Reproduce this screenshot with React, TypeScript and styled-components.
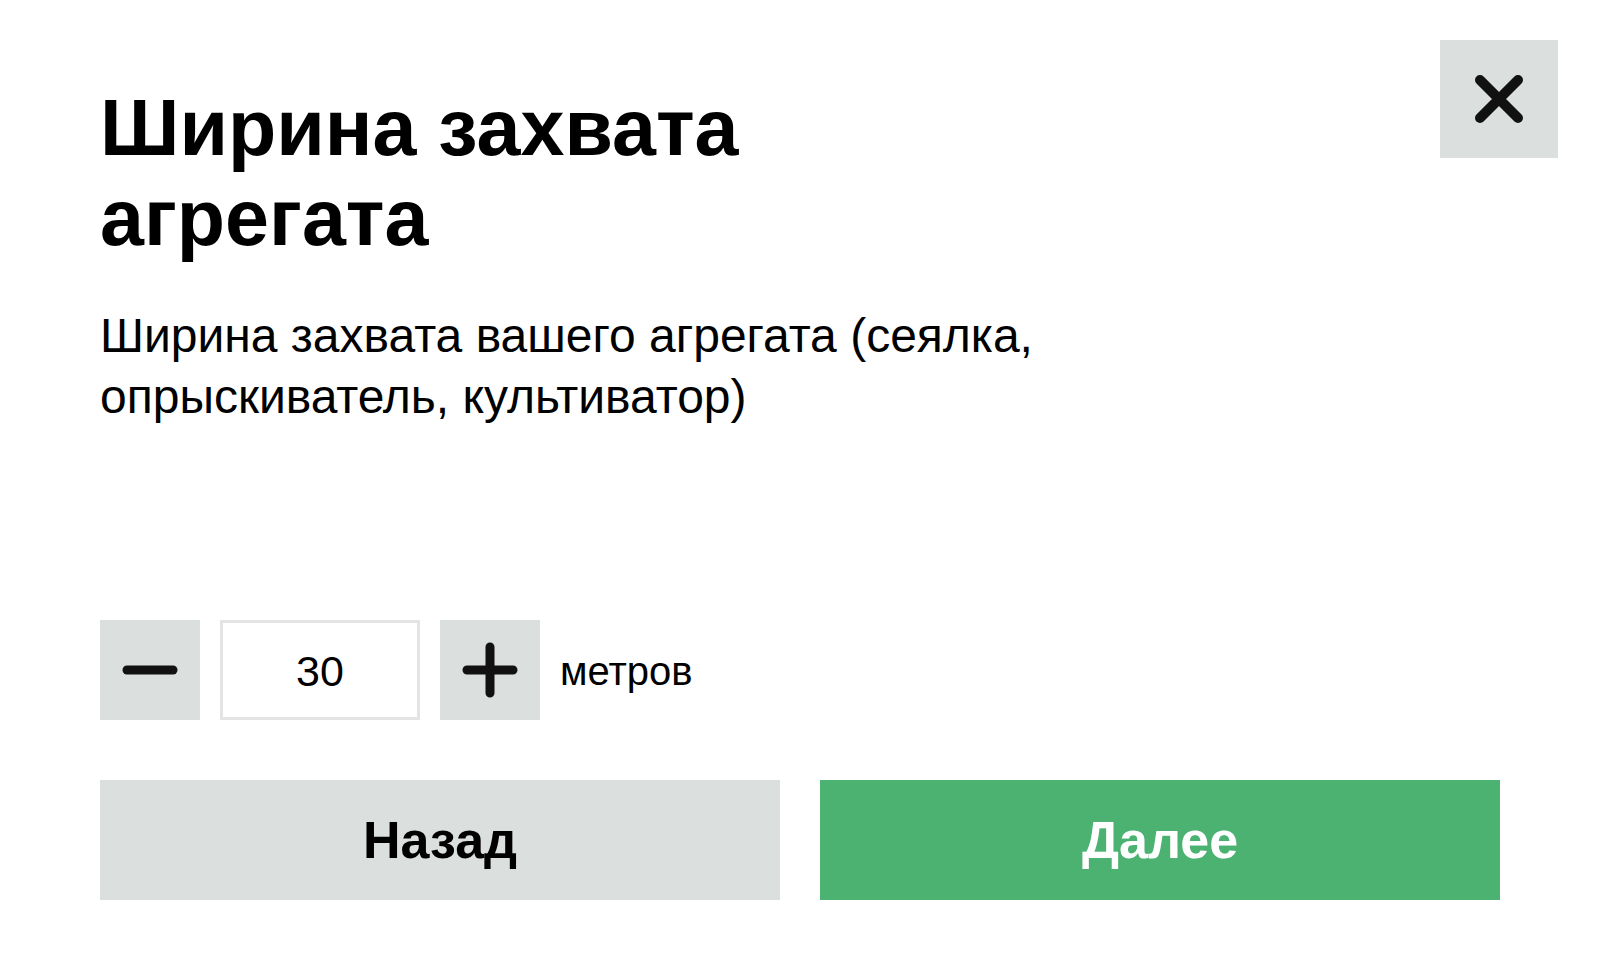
import React, { useState } from "react";
import styled, { createGlobalStyle } from "styled-components";

const GlobalStyle = createGlobalStyle`
  html, body {
    margin: 0;
    padding: 0;
    background: #ffffff;
  }
  body {
    font-family: "Liberation Sans", Arial, sans-serif;
    color: #000;
  }
`;

const Page = styled.div`
  position: relative;
  box-sizing: border-box;
  min-height: 100vh;
  display: flex;
  flex-direction: column;
  padding: 83px 100px 60px 100px;
`;

const Title = styled.h1`
  margin: 0;
  max-width: 800px;
  font-size: 79px;
  line-height: 90px;
  font-weight: 700;
  letter-spacing: 0;
`;

const Description = styled.p`
  margin: 42px 0 0 0;
  max-width: 1100px;
  font-size: 48px;
  line-height: 61px;
  font-weight: 400;
`;

const CloseButton = styled.button`
  position: absolute;
  top: 40px;
  right: 42px;
  width: 118px;
  height: 118px;
  border: none;
  padding: 0;
  background: #dbdfdd;
  display: flex;
  align-items: center;
  justify-content: center;
  cursor: pointer;
`;

const Stepper = styled.div`
  margin-top: auto;
  display: flex;
  align-items: center;
  gap: 20px;
`;

const StepButton = styled.button`
  width: 100px;
  height: 100px;
  border: none;
  padding: 0;
  background: #dbdfdd;
  display: flex;
  align-items: center;
  justify-content: center;
  cursor: pointer;
`;

const ValueBox = styled.div`
  box-sizing: border-box;
  width: 200px;
  height: 100px;
  border: 3px solid #e2e5e3;
  display: flex;
  align-items: center;
  justify-content: center;
  font-size: 43px;
  padding-top: 3px;
`;

const Unit = styled.span`
  font-size: 40px;
  margin-top: 3px;
`;

const Actions = styled.div`
  margin-top: 60px;
  display: grid;
  grid-template-columns: 1fr 1fr;
  gap: 40px;
`;

const ActionButton = styled.button<{ $primary?: boolean }>`
  height: 120px;
  border: none;
  background: ${(p) => (p.$primary ? "#4bb272" : "#dbdfdd")};
  color: ${(p) => (p.$primary ? "#ffffff" : "#000000")};
  font-family: "Liberation Sans", Arial, sans-serif;
  font-weight: 700;
  font-size: 52px;
  cursor: pointer;
`;

const Icon = ({ kind }: { kind: "close" | "minus" | "plus" }) => {
  if (kind === "close") {
    return (
      <svg width="48" height="48" viewBox="0 0 48 48">
        <path d="M5 5 L43 43 M43 5 L5 43" stroke="#111" strokeWidth="10" strokeLinecap="round" />
      </svg>
    );
  }
  return (
    <svg width="56" height="56" viewBox="0 0 56 56">
      <path
        d={kind === "plus" ? "M5 28 H51 M28 5 V51" : "M5 28 H51"}
        stroke="#111"
        strokeWidth="9"
        strokeLinecap="round"
      />
    </svg>
  );
};

export default function App() {
  const [value, setValue] = useState(30);

  return (
    <>
      <GlobalStyle />
      <Page>
        <CloseButton aria-label="close">
          <Icon kind="close" />
        </CloseButton>
        <Title>Ширина захвата агрегата</Title>
        <Description>
          Ширина захвата вашего агрегата (сеялка, опрыскиватель, культиватор)
        </Description>
        <Stepper>
          <StepButton onClick={() => setValue((v) => Math.max(0, v - 1))}>
            <Icon kind="minus" />
          </StepButton>
          <ValueBox>{value}</ValueBox>
          <StepButton onClick={() => setValue((v) => v + 1)}>
            <Icon kind="plus" />
          </StepButton>
          <Unit>метров</Unit>
        </Stepper>
        <Actions>
          <ActionButton>Назад</ActionButton>
          <ActionButton $primary>Далее</ActionButton>
        </Actions>
      </Page>
    </>
  );
}
